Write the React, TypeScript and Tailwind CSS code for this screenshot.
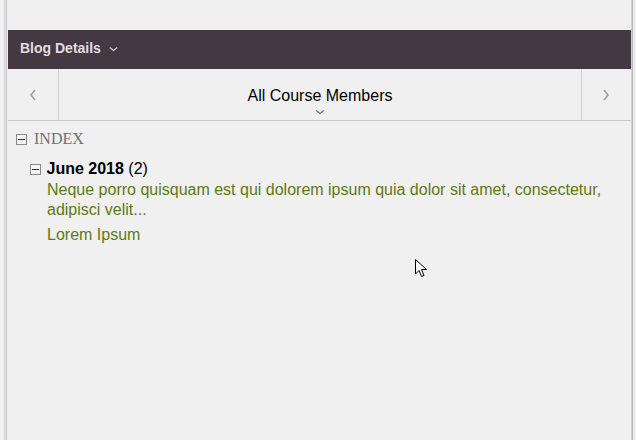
import React from "react";

// Small boxed minus toggle used in the index tree
function Toggle() {
    return (
        <span className="inline-flex h-[11px] w-[11px] items-center justify-center border border-[#8a8a8a] bg-[#f4f4f4]">
            <span className="h-[1px] w-[7px] bg-[#333]" />
        </span>
    );
}

function Chevron({ dir, className }: { dir: "left" | "right" | "down"; className?: string }) {
    const d =
        dir === "left" ? "M6 1 L2 6 L6 11" : dir === "right" ? "M2 1 L6 6 L2 11" : "M1 2 L6 6 L11 2";
    const size = dir === "down" ? { w: 12, h: 8 } : { w: 8, h: 12 };
    return (
        <svg width={size.w} height={size.h} viewBox={`0 0 ${size.w} ${size.h}`} className={className}>
            <path d={d} fill="none" stroke="currentColor" strokeWidth="1.6" />
        </svg>
    );
}

function App() {
    return (
        <div className="relative flex h-[440px] w-[636px] overflow-hidden bg-[#f0f0f0] font-['Liberation_Sans',Arial,sans-serif]">
            {/* left frame lines */}
            <div className="ml-[4px] w-[1px] bg-[#d4d4d8]" />
            <div className="w-[1px] bg-[#e6e6e6]" />
            <div className="w-[1px] bg-[#c4c4cc]" />

            {/* Panel */}
            <div className="flex w-[624px] flex-col">
                <div className="h-[30px]" />

                {/* Header */}
                <div className="ml-[1px] flex h-[39px] items-center gap-[8px] bg-[#443842] pb-[2px] pl-[12px]">
                    <span className="text-[14px] font-bold text-[#e2dde0]">Blog Details</span>
                    <Chevron dir="down" className="mt-[1px] h-[6px] w-[9px] text-[#d8d2d6]" />
                </div>

                {/* Navigation */}
                <div className="ml-[1px] flex h-[52px] border-b border-[#c8c8cc]">
                    <div className="flex w-[51px] items-center justify-center border-r border-[#cfcfd4] text-[#a0a0a0]">
                        <Chevron dir="left" />
                    </div>
                    <div className="relative flex flex-1 flex-col items-center pt-[18px]">
                        <span className="text-[16px] leading-[18px] text-black">All Course Members</span>
                        <Chevron dir="down" className="mt-[4px] h-[6px] w-[10px] text-[#707070]" />
                    </div>
                    <div className="flex w-[50px] items-center justify-center border-l border-[#cfcfd4] pr-[2px] text-[#a0a0a0]">
                        <Chevron dir="right" />
                    </div>
                </div>

                {/* Index */}
                <div className="flex flex-col pl-[9px] pt-[9px]">
                    <div className="flex items-center gap-[7px]">
                        <Toggle />
                        <span className="font-['Liberation_Serif','Times_New_Roman',serif] text-[16px] leading-[18px] text-[#707070]">
                            INDEX
                        </span>
                    </div>

                    <div className="mt-[12px] flex flex-col pl-[14px]">
                        <div className="flex items-center gap-[5.5px]">
                            <Toggle />
                            <span className="text-[16px] leading-[18px] text-black">
                                <span className="font-bold">June 2018</span> (2)
                            </span>
                        </div>
                        <div className="pl-[17px]">
                            <p className="mt-[2px] text-[16px] leading-[20px] text-[#5e7a12]">
                                Neque porro quisquam est qui dolorem ipsum quia dolor sit amet, consectetur,
                                <br />
                                adipisci velit...
                            </p>
                            <p className="mt-[5px] text-[16px] leading-[20px] text-[#5e7a12]">Lorem Ipsum</p>
                        </div>
                    </div>
                </div>
            </div>

            {/* right frame lines */}
            <div className="w-[1px] bg-[#d0d0d4]" />
            <div className="w-[1px] bg-[#b8b8bc]" />
            <div className="flex-1 bg-[#ececec]" />

            {/* mouse cursor */}
            <svg width="14" height="20" viewBox="0 0 14 20" className="absolute left-[415px] top-[259px]">
                <path d="M0.5 0.5 L0.5 15 L4 11.5 L6.5 17.5 L9 16.5 L6.5 10.5 L11.5 10.5 Z" fill="#fff" stroke="#000" strokeWidth="1" />
            </svg>
        </div>
    );
}

export default App;
